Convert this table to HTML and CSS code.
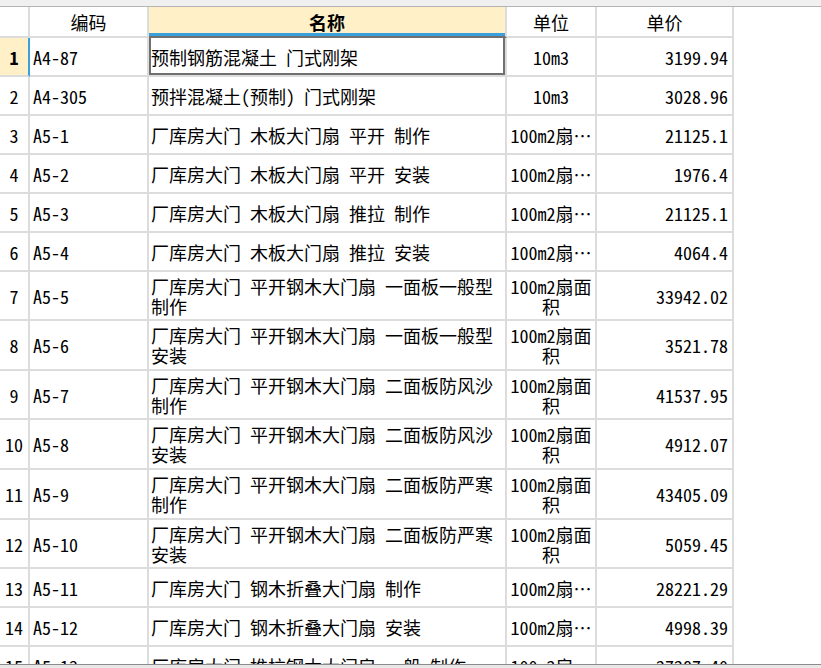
FILE: index.html
```html
<!DOCTYPE html>
<html lang="zh-CN">
<head>
<meta charset="utf-8">
<title>定额</title>
<link rel="stylesheet" href="styles.css">
</head>
<body>
<div class="app">
  <div class="topbar"></div>
  <div class="grid">
    <div class="row head">
      <div class="cell rn"></div>
      <div class="cell c">编码</div>
      <div class="cell c active">名称</div>
      <div class="cell c">单位</div>
      <div class="cell c">单价</div>
    </div>
    <div class="row cur">
      <div class="cell rn">1</div>
      <div class="cell code">A4-87</div>
      <div class="cell name sel">预制钢筋混凝土 门式刚架</div>
      <div class="cell unit">10m3</div>
      <div class="cell price">3199.94</div>
    </div>
    <div class="row">
      <div class="cell rn">2</div>
      <div class="cell code">A4-305</div>
      <div class="cell name">预拌混凝土(预制) 门式刚架</div>
      <div class="cell unit">10m3</div>
      <div class="cell price">3028.96</div>
    </div>
    <div class="row">
      <div class="cell rn">3</div>
      <div class="cell code">A5-1</div>
      <div class="cell name">厂库房大门 木板大门扇 平开 制作</div>
      <div class="cell unit">100m2扇…</div>
      <div class="cell price">21125.1</div>
    </div>
    <div class="row">
      <div class="cell rn">4</div>
      <div class="cell code">A5-2</div>
      <div class="cell name">厂库房大门 木板大门扇 平开 安装</div>
      <div class="cell unit">100m2扇…</div>
      <div class="cell price">1976.4</div>
    </div>
    <div class="row">
      <div class="cell rn">5</div>
      <div class="cell code">A5-3</div>
      <div class="cell name">厂库房大门 木板大门扇 推拉 制作</div>
      <div class="cell unit">100m2扇…</div>
      <div class="cell price">21125.1</div>
    </div>
    <div class="row">
      <div class="cell rn">6</div>
      <div class="cell code">A5-4</div>
      <div class="cell name">厂库房大门 木板大门扇 推拉 安装</div>
      <div class="cell unit">100m2扇…</div>
      <div class="cell price">4064.4</div>
    </div>
    <div class="row tall">
      <div class="cell rn">7</div>
      <div class="cell code">A5-5</div>
      <div class="cell name">厂库房大门 平开钢木大门扇 一面板一般型 制作</div>
      <div class="cell unit">100m2扇面积</div>
      <div class="cell price">33942.02</div>
    </div>
    <div class="row tall2">
      <div class="cell rn">8</div>
      <div class="cell code">A5-6</div>
      <div class="cell name">厂库房大门 平开钢木大门扇 一面板一般型 安装</div>
      <div class="cell unit">100m2扇面积</div>
      <div class="cell price">3521.78</div>
    </div>
    <div class="row tall">
      <div class="cell rn">9</div>
      <div class="cell code">A5-7</div>
      <div class="cell name">厂库房大门 平开钢木大门扇 二面板防风沙 制作</div>
      <div class="cell unit">100m2扇面积</div>
      <div class="cell price">41537.95</div>
    </div>
    <div class="row tall2">
      <div class="cell rn">10</div>
      <div class="cell code">A5-8</div>
      <div class="cell name">厂库房大门 平开钢木大门扇 二面板防风沙 安装</div>
      <div class="cell unit">100m2扇面积</div>
      <div class="cell price">4912.07</div>
    </div>
    <div class="row tall2">
      <div class="cell rn">11</div>
      <div class="cell code">A5-9</div>
      <div class="cell name">厂库房大门 平开钢木大门扇 二面板防严寒 制作</div>
      <div class="cell unit">100m2扇面积</div>
      <div class="cell price">43405.09</div>
    </div>
    <div class="row tall">
      <div class="cell rn">12</div>
      <div class="cell code">A5-10</div>
      <div class="cell name">厂库房大门 平开钢木大门扇 二面板防严寒 安装</div>
      <div class="cell unit">100m2扇面积</div>
      <div class="cell price">5059.45</div>
    </div>
    <div class="row">
      <div class="cell rn">13</div>
      <div class="cell code">A5-11</div>
      <div class="cell name">厂库房大门 钢木折叠大门扇 制作</div>
      <div class="cell unit">100m2扇…</div>
      <div class="cell price">28221.29</div>
    </div>
    <div class="row">
      <div class="cell rn">14</div>
      <div class="cell code">A5-12</div>
      <div class="cell name">厂库房大门 钢木折叠大门扇 安装</div>
      <div class="cell unit">100m2扇…</div>
      <div class="cell price">4998.39</div>
    </div>
    <div class="row">
      <div class="cell rn">15</div>
      <div class="cell code">A5-13</div>
      <div class="cell name">厂库房大门 推拉钢木大门扇 一般 制作</div>
      <div class="cell unit">100m2扇…</div>
      <div class="cell price">27287.40</div>
    </div>
  </div>
  <div class="bottombar"></div>
</div>
</body>
</html>
```

FILE: styles.css
```css
html, body {
  margin: 0;
  padding: 0;
  background: #ffffff;
}

body {
  font-family: "Noto Sans Mono CJK SC", "Noto Sans CJK SC", sans-serif;
  font-size: 18px;
  color: #000000;
}

.app {
  width: 821px;
  height: 668px;
  display: flex;
  flex-direction: column;
  overflow: hidden;
}

.topbar {
  flex: none;
  height: 6px;
  background: #f0f0f0;
  border-bottom: 1px solid #b4b4b4;
}

.grid {
  flex: 1;
  min-height: 0;
  overflow: hidden;
  display: flex;
  flex-direction: column;
}

.bottombar {
  flex: none;
  height: 3px;
  background: #e8e8e8;
  border-top: 1px solid #8c8c8c;
}

.row {
  flex: none;
  display: grid;
  grid-template-columns: 30px 119px 358px 90px 137px;
  height: 39px;
}

.row.head { height: 31px; }
.row.tall { height: 49px; }
.row.tall2 { height: 50px; }

.cell {
  box-sizing: border-box;
  border-right: 2px solid #dcdcdc;
  border-bottom: 2px solid #dcdcdc;
  display: flex;
  align-items: center;
  line-height: 20px;
  padding: 0 4px;
  overflow: hidden;
  white-space: nowrap;
}

.head .cell {
  justify-content: center;
  padding: 0;
}

.head .cell.active {
  background: #fff0c8;
  font-weight: bold;
  border-bottom-color: #707070;
  box-shadow: inset 0 -3px 0 #3aa0dc;
}

.rn {
  justify-content: center;
  padding: 0;
}

.cur .rn {
  background: #fff0c8;
  font-weight: bold;
  border-right-color: #3aa0dc;
}

.code {
  padding-left: 3px;
}

.name {
  padding-left: 2px;
  white-space: normal;
}

.name.sel {
  box-shadow: inset 2px 0 0 #707070, inset -2px 0 0 #707070, inset 0 -2px 0 #707070;
}

.unit {
  justify-content: center;
  text-align: center;
  white-space: normal;
  padding: 0 3px;
}

.price {
  justify-content: flex-end;
  padding-right: 4px;
}
```
